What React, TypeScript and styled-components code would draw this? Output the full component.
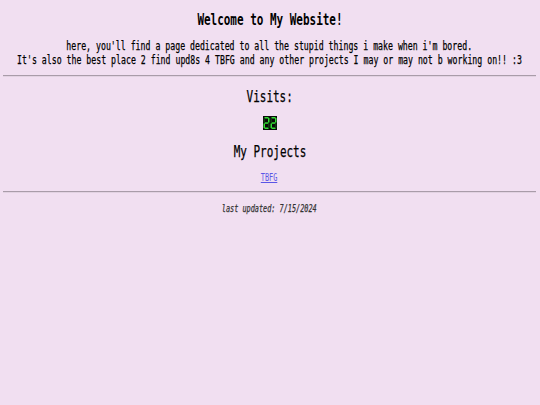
import * as React from "react";
import styled, { createGlobalStyle } from "styled-components";

const GlobalStyle = createGlobalStyle`
    body {
        margin: 0;
        background-color: #f1dff1;
        font-family: "DejaVu Sans Mono", "Liberation Mono", monospace;
        color: #000;
    }
`

const Page = styled.div`
    display: flex;
    flex-direction: column;
    align-items: center;
    padding: 0 4px 0 3px;
`

// the original font is a narrow mono, so squeeze the normal one
const Line = styled.div<{ $size: number; $lh: number; $top: number; $bold?: boolean; $italic?: boolean; $color?: string }>`
    font-size: ${p => p.$size}px;
    line-height: ${p => p.$lh}px;
    margin-top: ${p => p.$top}px;
    font-weight: ${p => p.$bold ? "bold" : "normal"};
    font-style: ${p => p.$italic ? "italic" : "normal"};
    color: ${p => p.$color || "#000"};
    white-space: nowrap;
    transform: scaleX(0.685);
    transform-origin: center;
    -webkit-text-stroke: ${p => p.$bold ? "0" : "0.25px"} currentColor;
`

const Rule = styled.hr<{ $top: number }>`
    align-self: stretch;
    margin: ${p => p.$top}px 0 0 0;
    border: none;
    border-top: 1px solid #a99ca9;
    border-bottom: 1px solid #e2d2e2;
`

const Counter = styled.div`
    margin-top: 9px;
    width: 14px;
    height: 14px;
    line-height: 0;
`

const ProjectLink = styled.a`
    color: #5a55e6;
    text-decoration: underline;
    -webkit-text-stroke: 0;
`

const Digit = ({ x }: { x: number }) => (
    <g>
        <rect x={x + 1.5} y={1} width={4} height={1.5} fill="#35e035" />
        <rect x={x + 5} y={2} width={1.5} height={4.5} fill="#35e035" />
        <rect x={x + 1.5} y={6.3} width={4} height={1.5} fill="#35e035" />
        <rect x={x + 0.5} y={7.5} width={1.5} height={4.5} fill="#35e035" />
        <rect x={x + 1.5} y={11.5} width={4} height={1.5} fill="#35e035" />
        <rect x={x + 0.5} y={2} width={1.5} height={4.5} fill="#0f3a0f" />
        <rect x={x + 5} y={7.5} width={1.5} height={4.5} fill="#0f3a0f" />
    </g>
)

export default function App() {
    return (
        <Page>
            <GlobalStyle />
            <Line $size={16} $lh={20} $top={10} $bold>Welcome to My Website!</Line>
            <Line $size={12} $lh={14} $top={9}>here, you'll find a page dedicated to all the stupid things i make when i'm bored.</Line>
            <Line $size={12} $lh={14} $top={0}>It's also the best place 2 find upd8s 4 TBFG and any other projects I may or may not b working on!! :3</Line>
            <Rule $top={8} />
            <Line $size={16} $lh={20} $top={10}>Visits:</Line>
            <Counter>
                <svg width="14" height="14" viewBox="0 0 14 14">
                    <rect width="14" height="14" fill="#0a0a0a" />
                    <Digit x={0} />
                    <Digit x={7} />
                </svg>
            </Counter>
            <Line $size={16} $lh={20} $top={12}>My Projects</Line>
            <Line $size={10} $lh={14} $top={9}><ProjectLink href="#">TBFG</ProjectLink></Line>
            <Rule $top={6} />
            <Line $size={10} $lh={14} $top={9} $italic $color="#333">last updated: 7/15/2024</Line>
        </Page>
    );
}
